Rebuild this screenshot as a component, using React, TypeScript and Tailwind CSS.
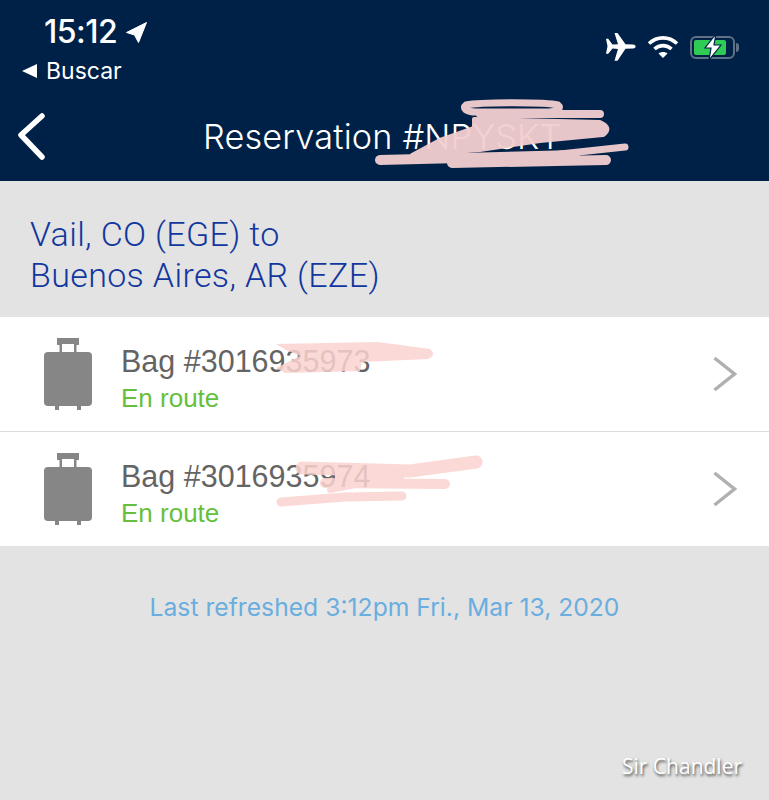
const BODY = 'font-["Liberation_Sans",Arial,sans-serif]';

function Suitcase() {
  return (
    <svg width="50" height="74" viewBox="0 0 50 74" className="shrink-0">
      <path d="M14 1h22v7h-2.500v8h-2.500V7H19v9h-2.500V8H14z" fill="#868686" />
      <rect x="1" y="15" width="48" height="54" rx="4" fill="#868686" />
      <rect x="12" y="68" width="4" height="5" fill="#868686" />
      <rect x="34" y="68" width="4" height="5" fill="#868686" />
    </svg>
  );
}

function BagRow({ number, children }: { number: string; children: React.ReactNode }) {
  return (
    <div className="relative flex h-[114px] items-center bg-white pl-[43px] pr-[32px]">
      <Suitcase />
      <div className={`ml-[28px] flex-1 pt-[8px] ${BODY}`}>
        <p className="text-[30.500px] leading-[36px] text-[#646464]">Bag #{number}</p>
        <p className="mt-[3px] text-[26px] leading-[32px] text-[#66bf3c]">En route</p>
      </div>
      <svg width="24" height="36" viewBox="0 0 24 36" fill="none" stroke="#b0b0b0" strokeWidth="3.500">
        <path d="M1.500 2l20 16-20 16" />
      </svg>
      {children}
    </div>
  );
}

function StatusIcons() {
  return (
    <div className="flex items-center gap-[11px]">
      {/* plane */}
      <svg width="30" height="28" viewBox="0 0 30 28">
        <path
          d="M0 6l2-.5 4.500 6 5.500-.3L8.500 0h3l8 11.200 7.500.2c3.500.3 3.500 3.800 0 4.100l-7.500.2-8 12h-3l3.500-11.800-5.500-.3-4.500 5.500-2-.5 1.500-7.300z"
          fill="#fff"
        />
      </svg>
      {/* wifi */}
      <svg width="32" height="24" viewBox="0 0 32 24" fill="none" stroke="#fff" strokeWidth="3.600">
        <path d="M2 8.500c8-7.500 20-7.500 28 0" />
        <path d="M7.500 14c5-4.500 12-4.500 17 0" />
        <path d="M16 23l-4.500-4.500c2.500-2 6.500-2 9 0z" fill="#fff" stroke="none" />
      </svg>
      {/* battery */}
      <div className="flex items-center gap-[1px]">
        <div className="relative flex h-[23px] w-[45px] items-center rounded-[6px] border-[2px] border-[#5f7186] p-[2px]">
          <div className="h-full w-[32px] rounded-[2px] bg-[#2ecc55]" />
          <svg width="18" height="26" viewBox="0 0 18 26" className="absolute left-[12px] top-[-3.500px]">
            <path d="M12 0L1 14h6L5 26 17 11h-7z" fill="#fff" stroke="#002147" strokeWidth="1.200" />
          </svg>
        </div>
        <div className="h-[9px] w-[3px] rounded-r-full bg-[#5f7186]" />
      </div>
    </div>
  );
}

export default function App() {
  return (
    <div className="relative flex h-[800px] w-[769px] flex-col overflow-hidden bg-[#e3e3e3]">
      {/* header */}
      <header className="relative h-[181px] shrink-0 bg-[#002147] text-white">
        <div className="flex items-start justify-between pl-[44px] pr-[30px] pt-[13px]">
          <div className="flex items-center gap-[9px] font-[Inter,sans-serif] text-[32px] font-medium leading-[38px] tracking-[-0.5px]">
            15:12
            <svg width="21" height="21" viewBox="0 0 21 21" className="mt-[1px]">
              <path d="M20.500.5L.5 10.500l8 2.500 4 7.500z" fill="#fff" stroke="#fff" strokeWidth="1" strokeLinejoin="round" />
            </svg>
          </div>
          <div className="pt-[20px]">
            <StatusIcons />
          </div>
        </div>
        <div className="mt-[-3px] flex items-center gap-[9px] pl-[22px] font-[Inter,sans-serif] text-[23px] leading-[26px]">
          <svg width="15" height="14" viewBox="0 0 15 14">
            <path d="M0 7l15-7v14z" fill="#fff" />
          </svg>
          Buscar
        </div>
        <div className="mt-[26px] flex items-center pl-[6px]">
          <svg width="50" height="50" viewBox="0 0 50 50" fill="none" stroke="#fff" strokeWidth="5.500" strokeLinecap="round" strokeLinejoin="round">
            <path d="M36 6L15 25 36 47" />
          </svg>
          <span className="ml-[147px] mt-[4px] font-[Inter,sans-serif] text-[34.300px] font-light leading-[40px] tracking-[0.15px]">
            Reservation #NPYSKT
          </span>
        </div>
        <svg className="absolute left-0 top-0 opacity-95" width="769" height="181" fill="none" stroke="#f3cfcf" strokeLinecap="round" strokeLinejoin="round">
          <path d="M466 105c15-3 80-3 92 0 4 3 0 7-12 7h-70c-10 0-14-4-10-7z" strokeWidth="7" />
          <path d="M480 114h120" strokeWidth="8" />
          <path d="M474 119l126 3q13 6 3 13l-63 6-60 9-68 5 28-15 34-12z" fill="#f3cfcf" strokeWidth="4" />
          <path d="M380 160l195-5" strokeWidth="10" />
          <path d="M452 163l154-3" strokeWidth="10" />
          <path d="M560 154l65-7" strokeWidth="7" />
        </svg>
      </header>

      {/* route */}
      <div className="flex h-[136px] shrink-0 flex-col justify-center pl-[30px] pt-[11px] font-['Roboto',sans-serif] text-[34px] font-light leading-[41px] tracking-[0.35px] text-[#12379e]">
        <p>Vail, CO (EGE) to</p>
        <p>Buenos Aires, AR (EZE)</p>
      </div>

      {/* bags */}
      <BagRow number="3016935973">
        <svg className="absolute left-0 top-0 opacity-85" width="500" height="114" fill="#fbd3d0">
          <path d="M276 27l102-2 52 7q7 6-2 10l-66 3-2 9-75 2-9-5 24-12-14-6z" />
        </svg>
      </BagRow>
      <div className="h-px shrink-0 bg-[#dcdcdc]" />
      <BagRow number="3016935974">
        <svg className="absolute left-0 top-0 opacity-85" width="500" height="114" fill="none" stroke="#fbd3d0" strokeLinecap="round" strokeLinejoin="round">
          <path d="M302 36l108 3 66-9" strokeWidth="13" />
          <path d="M325 51l120 1" strokeWidth="10" />
          <path d="M340 44l60 4" strokeWidth="10" />
          <path d="M281 70l64-5 57-1" strokeWidth="9" />
          <path d="M330 58l30-6" strokeWidth="6" />
        </svg>
      </BagRow>

      {/* footer */}
      <p className="mt-[47px] text-center font-[Inter,sans-serif] text-[24.700px] leading-[28px] text-[#6aaee0]">
        Last refreshed 3:12pm Fri., Mar 13, 2020
      </p>

      {/* watermark */}
      <span className="absolute left-[622px] top-[753px] font-['Open_Sans',sans-serif] text-[21px] leading-[26px] text-white [text-shadow:1px_2px_3px_rgba(0,0,0,0.7)]">
        Sir Chandler
      </span>
    </div>
  );
}
